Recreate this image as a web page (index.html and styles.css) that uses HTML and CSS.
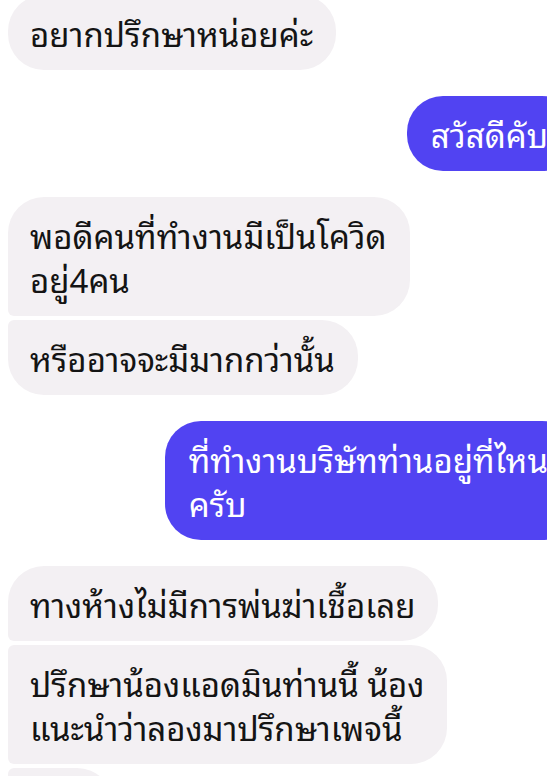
FILE: index.html
```html
<!DOCTYPE html>
<html lang="th">
<head>
<meta charset="utf-8">
<title>Chat</title>
<link rel="stylesheet" href="styles.css">
</head>
<body>
<main class="chat">
  <div class="msg in solo">อยากปรึกษาหน่อยค่ะ</div>
  <div class="msg out">สวัสดีคับ</div>
  <div class="group">
    <div class="msg in first">พอดีคนที่ทำงานมีเป็นโควิด<br>อยู่4คน</div>
    <div class="msg in last">หรืออาจจะมีมากกว่านั้น</div>
  </div>
  <div class="msg out">ที่ทำงานบริษัทท่านอยู่ที่ไหน<br>ครับ</div>
  <div class="group">
    <div class="msg in first">ทางห้างไม่มีการพ่นฆ่าเชื้อเลย</div>
    <div class="msg in mid">ปรึกษาน้องแอดมินท่านนี้ น้อง<br>แนะนำว่าลองมาปรึกษาเพจนี้</div>
    <div class="msg in mid stub">&nbsp;</div>
  </div>
</main>
</body>
</html>
```

FILE: styles.css
```css
html, body {
  margin: 0;
  padding: 0;
  background: #ffffff;
  overflow: hidden;
}
body {
  width: 547px;
  height: 776px;
}
.chat {
  width: 570px;
  display: flex;
  flex-direction: column;
  gap: 26px;
  padding: 0 0 0 8px;
  margin-top: -5px;
  font-family: "Noto Sans Thai Looped", "Noto Sans", sans-serif;
  font-size: 33px;
  line-height: 44px;
}
.group {
  display: flex;
  flex-direction: column;
  gap: 4px;
  align-items: flex-start;
}
.msg {
  padding: 16px 23px 15px 22px;
  border-radius: 36px;
  white-space: nowrap;
}
.in {
  align-self: flex-start;
  background: #f3f0f3;
  color: #141414;
}
.out {
  align-self: flex-end;
  background: #5143f2;
  color: #ffffff;
  padding-left: 24px;
  padding-right: 30px;
}
.in.first { border-bottom-left-radius: 6px; }
.in.mid { border-top-left-radius: 6px; border-bottom-left-radius: 6px; }
.in.last { border-top-left-radius: 6px; }
.stub { width: 60px; }
```
